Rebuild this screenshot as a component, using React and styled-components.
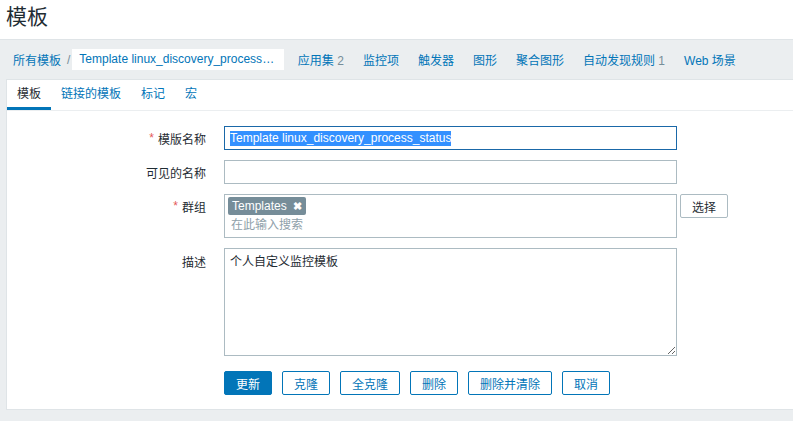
import styled, { createGlobalStyle } from "styled-components";

const GlobalStyles = createGlobalStyle`
  html, body {
    margin: 0;
    padding: 0;
    background: #ebeef0;
    overflow: hidden;
  }
  body, input, textarea, button {
    font-family: "Liberation Sans", Arial, "Noto Sans CJK SC", sans-serif;
    font-size: 12px;
    color: #1f2c33;
  }
  * { box-sizing: border-box; }
`;

const Pagina = styled.div`
  width: 793px;
  min-height: 421px;
  display: flex;
  flex-direction: column;
  background: #ebeef0;
`;

const Cabecera = styled.header`
  height: 39px;
  background: #ffffff;
  padding-left: 6px;
`;

const Titulo = styled.h1`
  margin: 0;
  font-size: 21px;
  font-weight: normal;
  line-height: 33px;
  color: #1f2c33;
`;

const BarraNav = styled.nav`
  height: 40px;
  display: flex;
  align-items: center;
  padding-left: 3px;
  border-top: 1px solid #dfe4e7;
`;

const Migas = styled.div`
  display: flex;
  align-items: center;
  padding: 0 4px 0 10px;
`;

const Enlace = styled.a`
  color: #0275b8;
  text-decoration: none;
  white-space: nowrap;
`;

const Separador = styled.span`
  color: #768d99;
  margin: 0 2px 0 6px;
`;

const CajaActual = styled.div`
  width: 212px;
  height: 21px;
  background: #ffffff;
  padding: 0 7px;
  line-height: 21px;
  color: #0275b8;
  white-space: nowrap;
  overflow: hidden;
  text-overflow: ellipsis;
`;

const ItemNav = styled.a`
  padding: 0 9.5px;
  color: #0275b8;
  text-decoration: none;
  white-space: nowrap;
`;

const Cuenta = styled.span`
  color: #768d99;
`;

const Contenido = styled.main`
  padding: 0 0 11px 6px;
`;

const Panel = styled.section`
  background: #ffffff;
  border: 1px solid #dfe4e7;
  border-right: none;
`;

const Pestanas = styled.ul`
  margin: 0;
  padding: 0;
  list-style: none;
  display: flex;
  height: 31px;
  border-bottom: 1px solid #ebeef0;
`;

const Pestana = styled.li`
  padding: 0 10px;
  line-height: 28px;
  color: ${(p) => (p.$activa ? "#1f2c33" : "#0275b8")};
  border-bottom: 3px solid ${(p) => (p.$activa ? "#0275b8" : "transparent")};
  box-sizing: content-box;
  height: 27px;
`;

const Formulario = styled.form`
  display: grid;
  grid-template-columns: 208px 462px auto;
  align-items: start;
  justify-items: start;
  row-gap: 10px;
  padding: 15px 0 14px;
`;

const Etiqueta = styled.label`
  justify-self: stretch;
  height: 24px;
  display: flex;
  justify-content: flex-end;
  align-items: center;
  padding-right: 9px;
  margin-top: ${(p) => p.$desfase || 0}px;
  white-space: nowrap;
`;

const Asterisco = styled.span`
  color: #e45959;
  margin-right: 4px;
`;

const CampoTexto = styled.input`
  margin: 0 0 0 9px;
  width: 453px;
  height: 24px;
  border: 1px solid #acbbc2;
  background: #ffffff;
  padding: 0 5px;
  outline: none;
  display: block;
`;

const CampoEnfocado = styled.div`
  margin-left: 9px;
  width: 453px;
  height: 24px;
  border: 1px solid #1a68a8;
  padding: 0 5px;
  display: flex;
  align-items: center;
`;

const Seleccion = styled.span`
  background: #3390ff;
  color: #ffffff;
  line-height: 15px;
`;

const MultiSelect = styled.div`
  margin-left: 9px;
  width: 453px;
  height: 44px;
  border: 1px solid #acbbc2;
  padding: 2px 3px;
  display: flex;
  flex-direction: column;
  align-items: flex-start;
  gap: 1px;
`;

const Etiquetita = styled.span`
  display: inline-flex;
  align-items: center;
  gap: 6px;
  height: 18px;
  padding: 0 4px;
  background: #768d99;
  color: #ffffff;
  border-radius: 2px;
`;

const Cerrar = styled.span`
  font-weight: bold;
  font-size: 11px;
`;

const Marcador = styled.span`
  color: #8fa1aa;
  padding-left: 3px;
  line-height: 18px;
`;

const BotonSecundario = styled.button`
  margin-left: 3px;
  height: 24px;
  padding: 0 11px;
  background: #ffffff;
  border: 1px solid #acbbc2;
  border-radius: 2px;
  color: #1f2c33;
`;

const AreaTexto = styled.textarea`
  margin: 0 0 0 9px;
  width: 453px;
  height: 108px;
  border: 1px solid #acbbc2;
  padding: 5px 5px;
  line-height: 16px;
  resize: vertical;
  outline: none;
  display: block;
`;

const FilaBotones = styled.div`
  grid-column: 2 / span 2;
  margin: 5px 0 0 9px;
  display: flex;
  gap: 10px;
`;

const Boton = styled.button`
  height: 24px;
  padding: 0 11px;
  border: 1px solid #0275b8;
  border-radius: 2px;
  background: ${(p) => (p.$principal ? "#0275b8" : "#ffffff")};
  color: ${(p) => (p.$principal ? "#ffffff" : "#0275b8")};
  white-space: nowrap;
`;

const navegacion = [
  { texto: "应用集", cuenta: 2 },
  { texto: "监控项" },
  { texto: "触发器" },
  { texto: "图形" },
  { texto: "聚合图形" },
  { texto: "自动发现规则", cuenta: 1 },
  { texto: "Web 场景" },
];

const pestanas = ["模板", "链接的模板", "标记", "宏"];

const botones = ["更新", "克隆", "全克隆", "删除", "删除并清除", "取消"];

const App = () => {
  return (
    <Pagina>
      <GlobalStyles />
      <Cabecera>
        <Titulo>模板</Titulo>
      </Cabecera>
      <BarraNav>
        <Migas>
          <Enlace>所有模板</Enlace>
          <Separador>/</Separador>
          <CajaActual>Template linux_discovery_process_status</CajaActual>
        </Migas>
        {navegacion.map((item) => (
          <ItemNav key={item.texto}>
            {item.texto}
            {item.cuenta !== undefined && <Cuenta> {item.cuenta}</Cuenta>}
          </ItemNav>
        ))}
      </BarraNav>
      <Contenido>
        <Panel>
          <Pestanas>
            {pestanas.map((p, i) => (
              <Pestana key={p} $activa={i === 0}>{p}</Pestana>
            ))}
          </Pestanas>
          <Formulario onSubmit={(e) => e.preventDefault()}>
            <Etiqueta><Asterisco>*</Asterisco>模版名称</Etiqueta>
            <CampoEnfocado>
              <Seleccion>Template linux_discovery_process_status</Seleccion>
            </CampoEnfocado>
            <span />

            <Etiqueta>可见的名称</Etiqueta>
            <CampoTexto defaultValue="" />
            <span />

            <Etiqueta><Asterisco>*</Asterisco>群组</Etiqueta>
            <MultiSelect>
              <Etiquetita>Templates <Cerrar>✖</Cerrar></Etiquetita>
              <Marcador>在此输入搜索</Marcador>
            </MultiSelect>
            <BotonSecundario type="button">选择</BotonSecundario>

            <Etiqueta $desfase={1}>描述</Etiqueta>
            <AreaTexto defaultValue="个人自定义监控模板" />
            <span />

            <FilaBotones>
              {botones.map((b, i) => (
                <Boton key={b} type="button" $principal={i === 0}>{b}</Boton>
              ))}
            </FilaBotones>
          </Formulario>
        </Panel>
      </Contenido>
    </Pagina>
  );
};

export default App;
